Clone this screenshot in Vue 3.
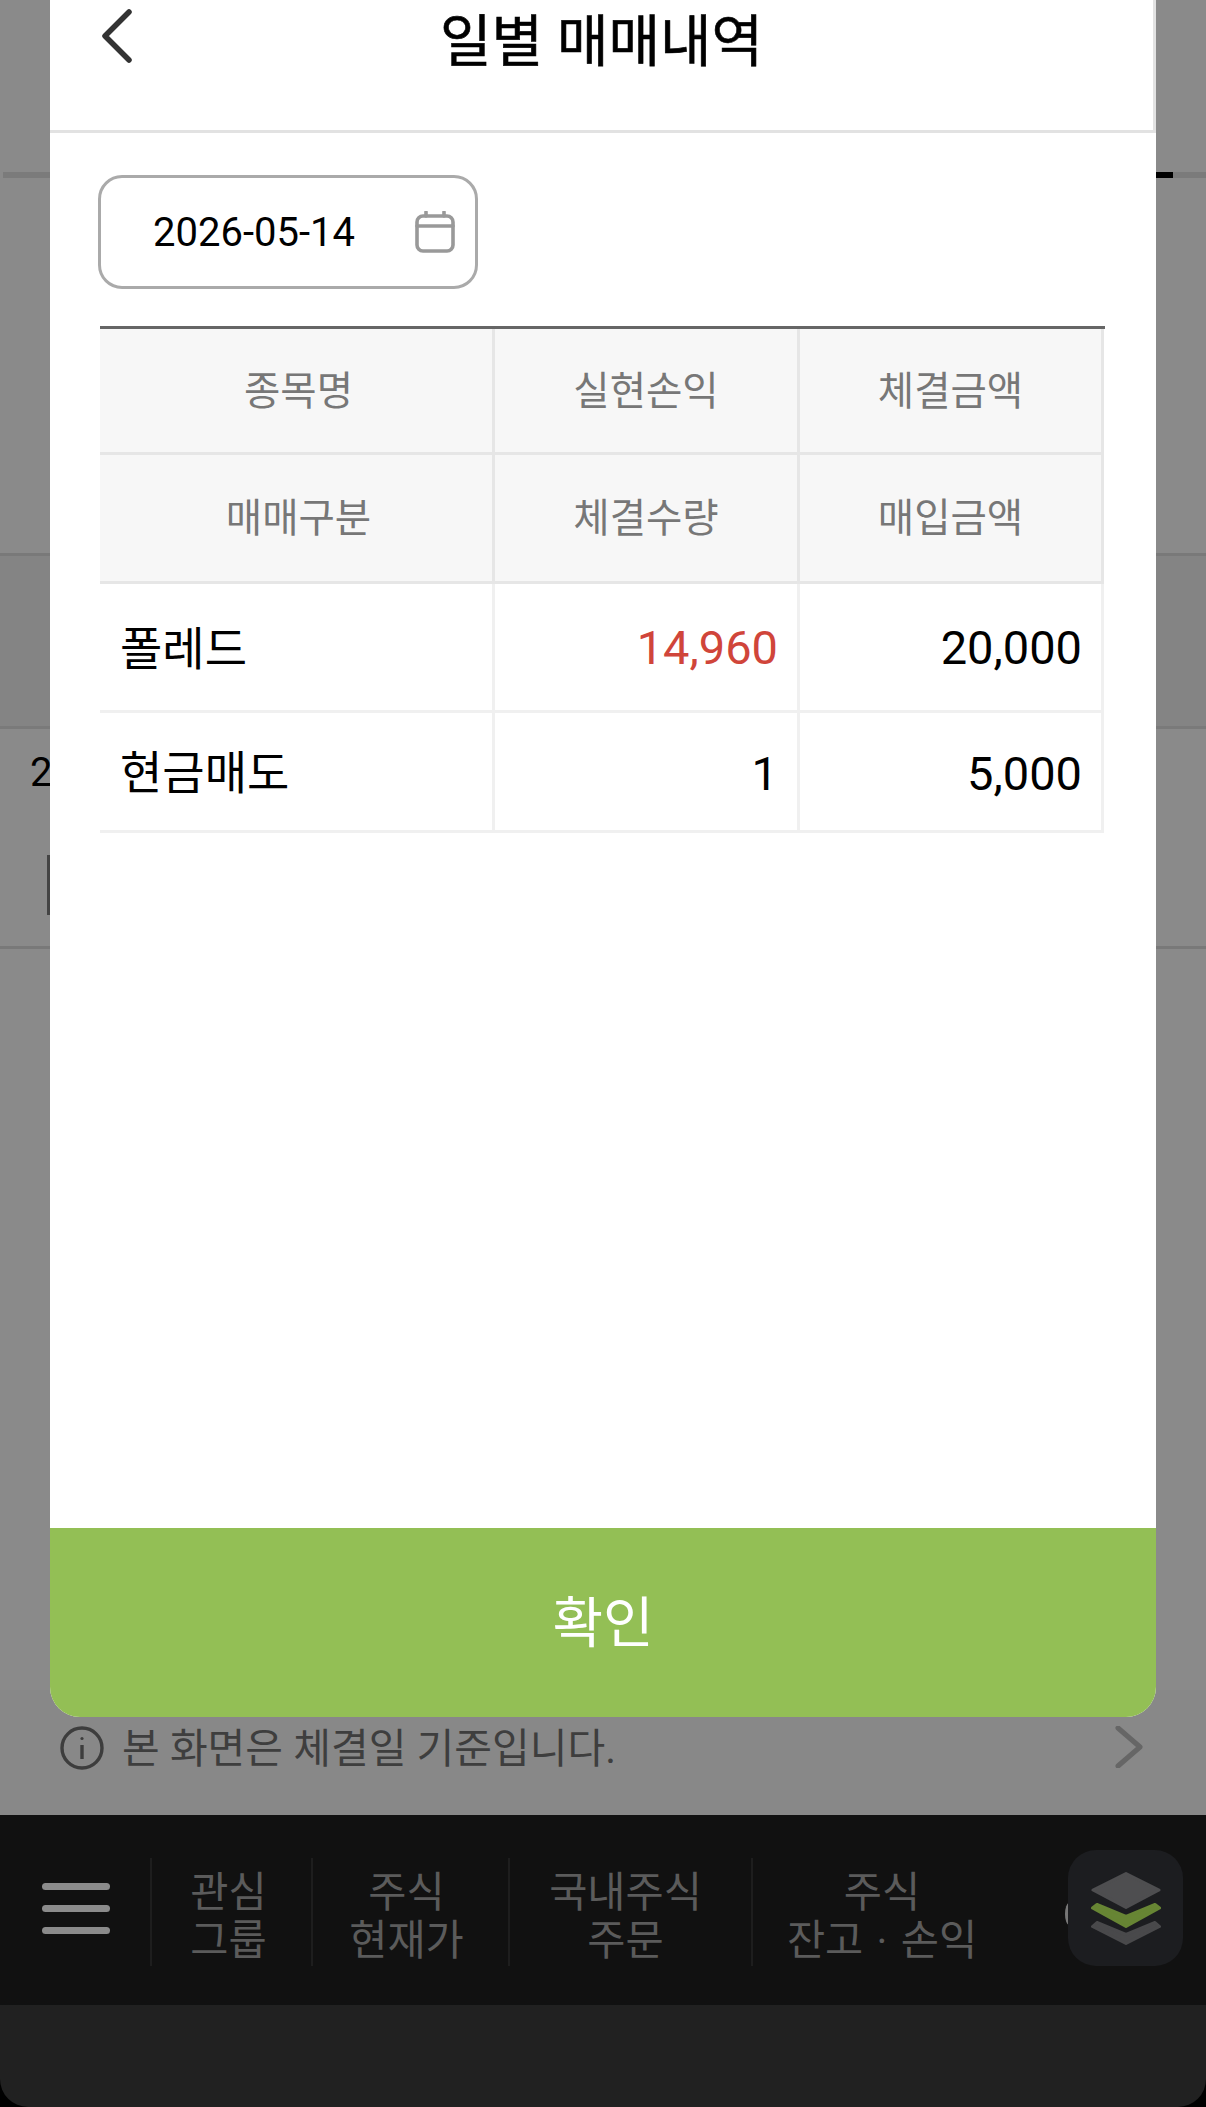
<template>
  <div class="page">
    <div class="content">
      <div class="tabs"><span class="tab-active"></span></div>
      <div class="band band-a"></div>
      <div class="band band-b"><span class="cut-text">2</span></div>
      <div class="band band-c"><span class="cut-box"></span></div>
      <div class="filler"></div>
      <div class="info-bar">
        <svg class="info-icon" viewBox="0 0 44 44" fill="none" stroke="#3d3d3d" stroke-width="3.4">
          <circle cx="22" cy="22" r="20" />
          <path d="M22 19v14" />
          <circle cx="22" cy="12.5" r="1.6" fill="#3d3d3d" stroke="none" />
        </svg>
        <span class="info-text">본 화면은 체결일 기준입니다.</span>
        <svg class="info-arrow" viewBox="0 0 28 42" fill="none" stroke="#666" stroke-width="5" stroke-linecap="round" stroke-linejoin="round">
          <path d="M3 2l22 19L3 40" />
        </svg>
      </div>
    </div>

    <nav class="nav">
      <div class="menu-btn">
        <span></span>
        <span></span>
        <span></span>
      </div>
      <div
        v-for="item in navItems"
        :key="item.first"
        class="nav-item"
        :style="{ width: item.width + 'px', paddingRight: item.shift + 'px' }"
      >
        <span>{{ item.first }}</span>
        <span>{{ item.second }}</span>
      </div>
      <span class="nav-cut"></span>
      <div class="float-btn">
        <svg viewBox="0 0 70 75" width="70" height="75" stroke-width="3" stroke-linejoin="round">
          <path d="M35 2.500L68 19 35 36.500 2 19z" fill="#4e4e50" stroke="#4e4e50" />
          <path d="M1.500 37L6 33.500l29 12 29-12 4.500 3.500L35 55.500z" fill="#678534" stroke="#678534" />
          <path d="M1.500 55.500L6 51.500l29 12 29-12 4.500 4L35 72.500z" fill="#49494b" stroke="#49494b" />
        </svg>
      </div>
    </nav>
    <div class="home-bar"></div>

    <div class="modal">
      <header class="modal-header">
        <svg class="back" viewBox="0 0 32 54" fill="none" stroke="#333" stroke-width="5.500" stroke-linecap="round" stroke-linejoin="round">
          <path d="M28 3L4 27l24 24" />
        </svg>
        <h3>일별 매매내역</h3>
      </header>

      <div class="modal-body">
        <div class="date-box">
          <span>2026-05-14</span>
          <svg class="calendar" viewBox="0 0 40 42" fill="none" stroke="#999" stroke-width="3.600" stroke-linecap="round">
            <rect x="2" y="5" width="36" height="35" rx="6" />
            <path d="M2 15h36M11 1v4M29 1v4" />
          </svg>
        </div>

        <div class="table">
          <div v-for="cell in headCells" :key="cell.label" class="cell head" :class="cell.cls">{{ cell.label }}</div>
          <div v-for="cell in bodyCells" :key="cell.label" class="cell body" :class="cell.cls">{{ cell.label }}</div>
        </div>
      </div>

      <button class="confirm">확인</button>
    </div>
  </div>
</template>

<script setup>
const navItems = [
  { first: '관심', second: '그룹', width: 161, shift: 6 },
  { first: '주식', second: '현재가', width: 197, shift: 8 },
  { first: '국내주식', second: '주문', width: 243, shift: 10 },
  { first: '주식', second: '잔고 · 손익', width: 274, shift: 14 }
]

const headCells = [
  { label: '종목명', cls: 'first' },
  { label: '실현손익' },
  { label: '체결금액' },
  { label: '매매구분', cls: 'first' },
  { label: '체결수량' },
  { label: '매입금액' }
]

const bodyCells = [
  { label: '폴레드', cls: 'left' },
  { label: '14,960', cls: 'right loss' },
  { label: '20,000', cls: 'right' },
  { label: '현금매도', cls: 'left' },
  { label: '1', cls: 'right low' },
  { label: '5,000', cls: 'right low' }
]
</script>

<style>
html,
body {
  margin: 0;
  background: #000;
}
</style>

<style scoped>
.page {
  position: relative;
  width: 1206px;
  height: 2107px;
  overflow: hidden;
  display: flex;
  flex-direction: column;
  background: #000;
  font-family: Roboto, "Noto Sans CJK KR", sans-serif;
}

.content {
  height: 1815px;
  display: flex;
  flex-direction: column;
  background: #8a8a8a;
}

.tabs {
  height: 178px;
  box-sizing: border-box;
  border-bottom: 6px solid #7b7b7b;
  margin-left: 3px;
  display: flex;
  justify-content: flex-end;
  align-items: flex-end;
}

.tab-active {
  width: 50px;
  height: 6px;
  margin-right: 33px;
  margin-bottom: -6px;
  background: #000;
}

.band {
  box-sizing: border-box;
  border-bottom: 3px solid #797979;
}

.band-a {
  height: 378px;
}

.band-b {
  position: relative;
  height: 173px;
  background: #848484;
  border-bottom-color: #7a7a7a;
}

.band-c {
  height: 220px;
  padding-top: 126px;
}

.cut-box {
  display: block;
  width: 3px;
  height: 60px;
  margin-left: 47px;
  background: #444;
}

.cut-text {
  position: absolute;
  left: 30px;
  top: 193px;
  font-size: 40px;
  line-height: 48px;
  color: #000;
}

.filler {
  flex: 1;
}

.info-bar {
  height: 125px;
  display: flex;
  align-items: flex-start;
  box-sizing: border-box;
  padding: 36px 63px 0 60px;
  background: #888;
}

.info-icon {
  width: 44px;
  height: 44px;
}

.info-text {
  margin-left: 18px;
  font-size: 41px;
  line-height: 46px;
  color: #3e3e3e;
}

.info-arrow {
  width: 28px;
  height: 42px;
  margin-left: auto;
}

.nav {
  position: relative;
  height: 190px;
  display: flex;
  align-items: flex-start;
  box-sizing: border-box;
  padding-top: 43px;
  background: #111;
}

.menu-btn {
  width: 150px;
  height: 108px;
  box-sizing: border-box;
  padding: 25px 0 0 42px;
  display: flex;
  flex-direction: column;
  gap: 15px;
}

.menu-btn span {
  width: 68px;
  height: 7px;
  border-radius: 4px;
  background: #8b8b8b;
}

.nav-item {
  height: 108px;
  box-sizing: border-box;
  border-left: 2px solid #1e1e1e;
  display: flex;
  flex-direction: column;
  align-items: center;
  font-size: 41.500px;
  line-height: 48px;
  word-spacing: 3px;
  padding-top: 11px;
  color: #5b5b5b;
}

.nav-item:last-of-type {
  border-right: 2px solid #1e1e1e;
}

.nav-cut {
  position: absolute;
  left: 1065px;
  top: 88px;
  width: 8px;
  height: 22px;
  border-radius: 50%;
  background: #777;
}

.float-btn {
  position: absolute;
  left: 1068px;
  top: 35px;
  width: 115px;
  height: 116px;
  border-radius: 28px;
  background: #1c1d20;
  display: flex;
  align-items: center;
  justify-content: center;
}

.home-bar {
  flex: 1;
  background: #212121;
  border-radius: 0 0 28px 28px;
}

.modal {
  position: absolute;
  top: 0;
  left: 50px;
  width: 1106px;
  height: 1717px;
  display: flex;
  flex-direction: column;
  background: #fff;
  border-radius: 0 0 30px 30px;
  overflow: hidden;
}

.modal-header {
  position: relative;
  height: 133px;
  box-sizing: border-box;
  border-bottom: 3px solid #e2e2e2;
  border-right: 3px solid #e2e2e2;
  display: flex;
  justify-content: center;
}

.modal-header h3 {
  margin: 0;
  font-size: 56px;
  font-weight: 400;
  line-height: 84px;
  color: #000;
  -webkit-text-stroke: 0.6px #000;
}

.back {
  position: absolute;
  left: 51px;
  top: 9px;
  width: 32px;
  height: 54px;
}

.modal-body {
  flex: 1;
  padding: 42px 51px 0 50px;
}

.date-box {
  width: 380px;
  height: 114px;
  margin-left: -2px;
  box-sizing: border-box;
  border: 3px solid #aaa;
  border-radius: 24px;
  display: flex;
  align-items: center;
  padding-left: 52px;
  font-size: 40px;
  color: #000;
}

.calendar {
  width: 40px;
  height: 42px;
  margin-left: 60px;
}

.table {
  margin-top: 37px;
  border-top: 3px solid #666;
  display: grid;
  grid-template-columns: 395px 305px 304px;
  grid-template-rows: 126px 129px 129px 120px;
}

.cell {
  box-sizing: border-box;
  display: flex;
  align-items: center;
  border-right: 3px solid #e6e6e6;
  border-bottom: 3px solid #e6e6e6;
}

.head {
  justify-content: center;
  padding-bottom: 7px;
  background: #f7f7f7;
  font-size: 39.500px;
  color: #777;
}

.head.first {
  padding-left: 5px;
}

.body {
  color: #000;
  border-color: #f0f0f0;
}

.left {
  padding-left: 20px;
  padding-bottom: 5px;
  font-size: 46px;
}

.right {
  justify-content: flex-end;
  padding-right: 19px;
  font-size: 47px;
}

.low {
  padding-top: 4px;
}

.loss {
  color: #d0453a;
}

.confirm {
  height: 189px;
  border: none;
  padding: 0 0 10px;
  background: #93bf55;
  font-family: inherit;
  font-size: 55px;
  color: #fff;
}
</style>
